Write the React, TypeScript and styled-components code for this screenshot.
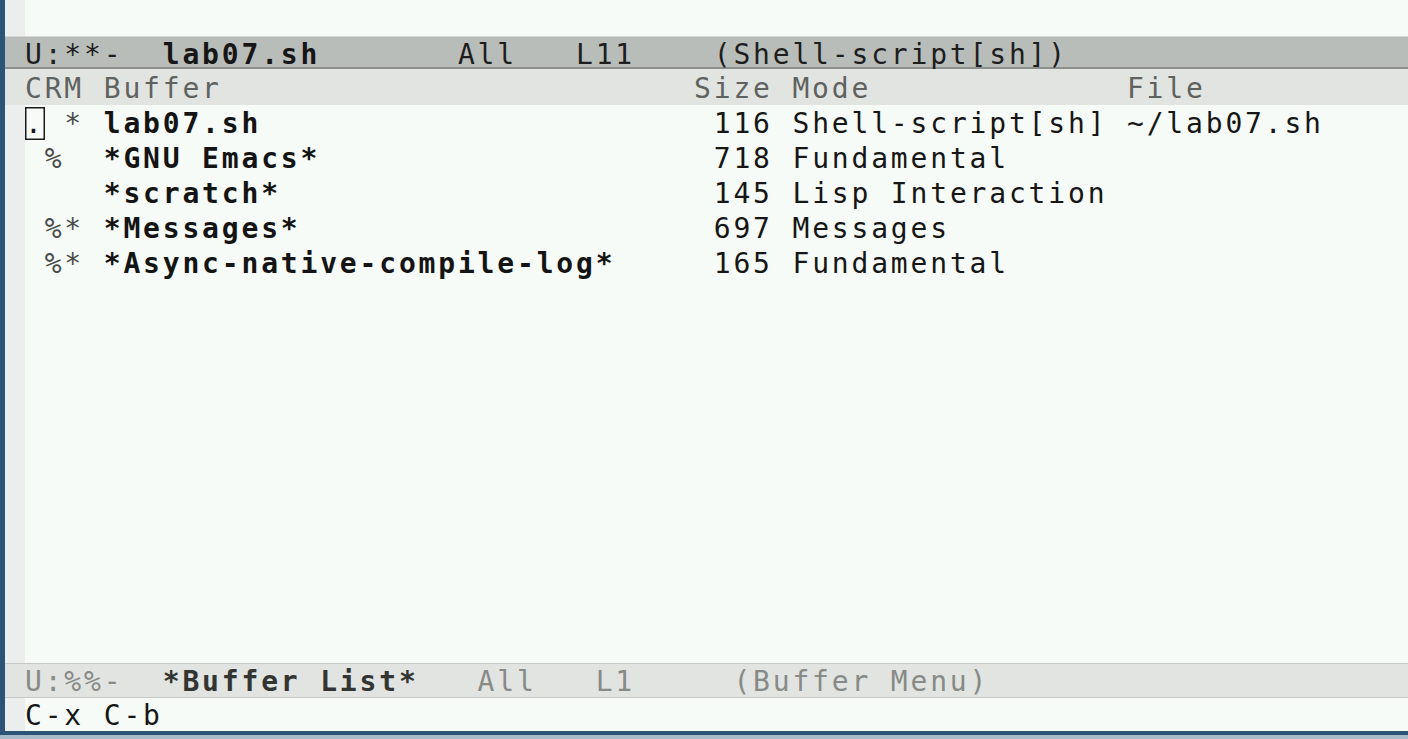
import React from "react";
import styled, { createGlobalStyle, css } from "styled-components";

const GlobalStyle = createGlobalStyle`
  html, body { margin: 0; padding: 0; height: 100%; overflow: hidden; }
  body { background: #a8bbca; font-family: "DejaVu Sans Mono", monospace; }
  #root { height: 100%; }
`;

const mono = css`
  font-family: "DejaVu Sans Mono", "Liberation Mono", monospace;
  font-size: 28px;
  letter-spacing: 2.82px;
  white-space: pre;
`;

const Screen = styled.div`
  height: 100vh;
  display: flex;
  flex-direction: column;
  padding-bottom: 4px;
  box-sizing: border-box;
  background: #a8bbca;
`;

const Frame = styled.div`
  flex: 1;
  display: flex;
  flex-direction: column;
  min-height: 0;
  border-left: 5px solid #2c5477;
  border-bottom: 4px solid #2c5477;
  background: #f6fbf8;
`;

const Window = styled.div<{ $height?: number }>`
  display: flex;
  background: #f6fbf8;
  ${(p) => (p.$height ? `height: ${p.$height}px; flex: none;` : `flex: 1; min-height: 0;`)}
`;

const Fringe = styled.div`
  width: 20px;
  flex: none;
  background: #eceeed;
`;

const TextArea = styled.div`
  flex: 1;
  display: flex;
  flex-direction: column;
  min-width: 0;
`;

const Line = styled.div`
  ${mono};
  height: 35px;
  line-height: 37px;
  color: #161616;
`;

const ModeLine = styled.div<{ $active?: boolean }>`
  ${mono};
  flex: none;
  box-sizing: border-box;
  padding-left: 20px;
  ${(p) =>
    p.$active
      ? css`
          height: 33px;
          line-height: 35px;
          background: #b9bdba;
          color: #1e1e1e;
          border-top: 1px solid #d3d6d3;
          border-bottom: 2px solid #8c908d;
        `
      : css`
          height: 35px;
          line-height: 35px;
          background: #e1e4e1;
          color: #878a87;
          border-top: 1px solid #c4c7c4;
          border-bottom: 1px solid #c4c7c4;
        `}
`;

const ModeName = styled.span<{ $active?: boolean }>`
  font-weight: bold;
  color: ${(p) => (p.$active ? "#161616" : "#333533")};
`;

const HeaderLine = styled.div`
  ${mono};
  flex: none;
  height: 36px;
  line-height: 40px;
  padding-left: 20px;
  background: #e1e4e1;
  color: #5f625f;
`;

const Echo = styled.div`
  ${mono};
  height: 33px;
  line-height: 35px;
  color: #161616;
`;

const Flags = styled.span`
  color: #4a4c4a;
`;

const Name = styled.span`
  font-weight: bold;
  color: #141414;
`;

const Cursor = styled.span`
  box-shadow: inset 0 0 0 1.5px #1a1a1a;
`;

type Buf = { crm: string; name: string; size: string; mode: string; file: string; cursor?: boolean };

const buffers: Buf[] = [
  { crm: ". *", name: "lab07.sh", size: "116", mode: "Shell-script[sh]", file: "~/lab07.sh", cursor: true },
  { crm: " % ", name: "*GNU Emacs*", size: "718", mode: "Fundamental", file: "" },
  { crm: "   ", name: "*scratch*", size: "145", mode: "Lisp Interaction", file: "" },
  { crm: " %*", name: "*Messages*", size: "697", mode: "Messages", file: "" },
  { crm: " %*", name: "*Async-native-compile-log*", size: "165", mode: "Fundamental", file: "" },
];

const pad = (s: string, n: number) => s + " ".repeat(Math.max(0, n - s.length));

const BufferRow: React.FC<{ b: Buf }> = ({ b }) => (
  <Line>
    {b.cursor ? (
      <>
        <Cursor>{b.crm[0]}</Cursor>
        <Flags>{b.crm.slice(1)}</Flags>
      </>
    ) : (
      <Flags>{b.crm}</Flags>
    )}
    {" "}
    <Name>{b.name}</Name>
    {" ".repeat(31 - b.name.length)}
    {b.size} {b.file ? pad(b.mode, 16) + " " + b.file : b.mode}
  </Line>
);

export default function App() {
  return (
    <>
      <GlobalStyle />
      <Screen>
        <Frame>
          <Window $height={36}>
            <Fringe />
            <TextArea />
          </Window>
          <ModeLine $active>
            {"U:**-  "}
            <ModeName $active>lab07.sh</ModeName>
            {"       All   L11    (Shell-script[sh])"}
          </ModeLine>
          <HeaderLine>{pad("CRM Buffer", 34) + pad("Size Mode", 22) + "File"}</HeaderLine>
          <Window>
            <Fringe />
            <TextArea>
              {buffers.map((b) => (
                <BufferRow key={b.name} b={b} />
              ))}
            </TextArea>
          </Window>
          <ModeLine>
            {"U:%%-  "}
            <ModeName>*Buffer List*</ModeName>
            {"   All   L1     (Buffer Menu)"}
          </ModeLine>
          <Window $height={33}>
            <Fringe />
            <TextArea>
              <Echo>C-x C-b</Echo>
            </TextArea>
          </Window>
        </Frame>
      </Screen>
    </>
  );
}
